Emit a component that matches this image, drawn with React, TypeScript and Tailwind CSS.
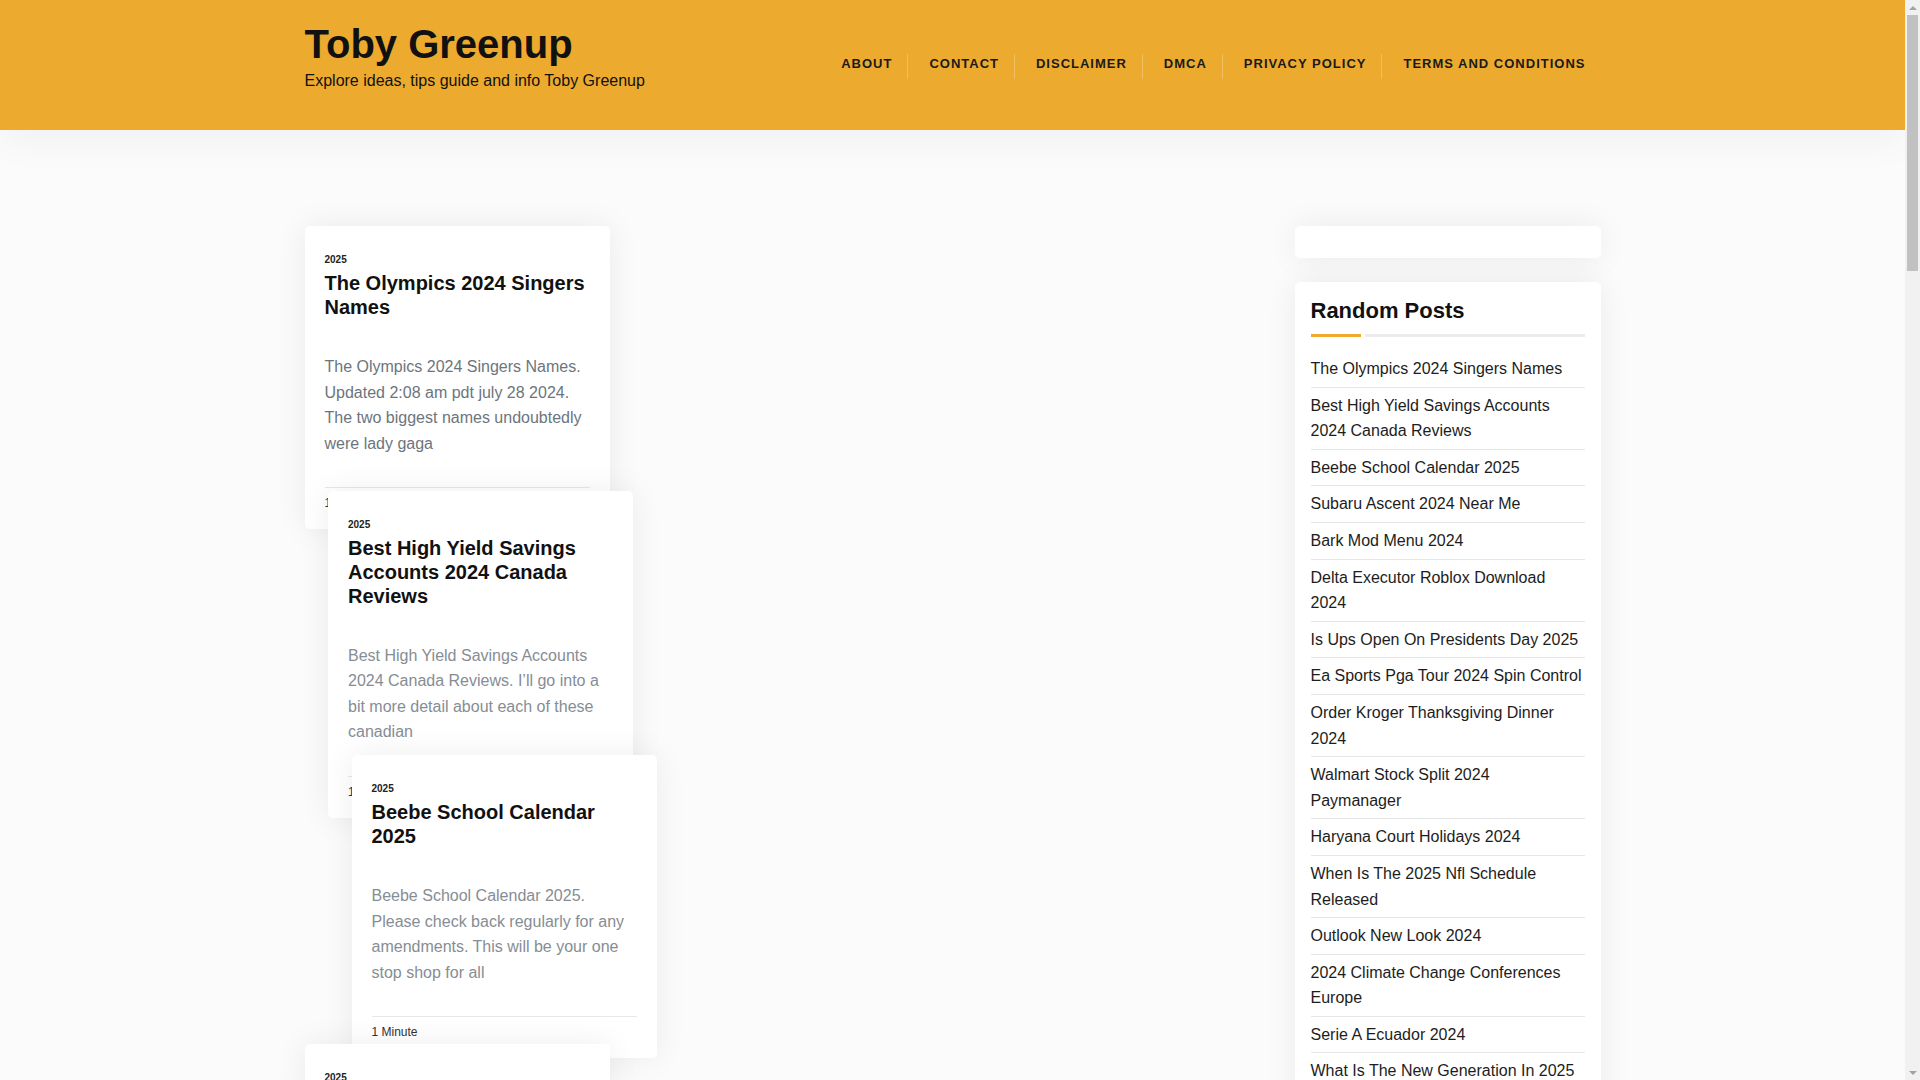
const navItems = [
  "About",
  "Contact",
  "Disclaimer",
  "DMCA",
  "Privacy Policy",
  "Terms and Conditions",
];

const randomPosts = [
  "The Olympics 2024 Singers Names",
  "Best High Yield Savings Accounts 2024 Canada Reviews",
  "Beebe School Calendar 2025",
  "Subaru Ascent 2024 Near Me",
  "Bark Mod Menu 2024",
  "Delta Executor Roblox Download 2024",
  "Is Ups Open On Presidents Day 2025",
  "Ea Sports Pga Tour 2024 Spin Control",
  "Order Kroger Thanksgiving Dinner 2024",
  "Walmart Stock Split 2024 Paymanager",
  "Haryana Court Holidays 2024",
  "When Is The 2025 Nfl Schedule Released",
  "Outlook New Look 2024",
  "2024 Climate Change Conferences Europe",
  "Serie A Ecuador 2024",
  "What Is The New Generation In 2025",
  "Nfl Draft 2024 Live Stream",
  "Calendar 2024 With Holidays Printable",
  "Best Budget Phones 2025 India",
  "Honda Civic 2025 Release Date",
];

type Post = {
  title: string;
  excerpt: string;
  top: number;
  left: number;
  faded?: boolean;
};

const posts: Post[] = [
  {
    title: "The Olympics 2024 Singers Names",
    excerpt:
      "The Olympics 2024 Singers Names. Updated 2:08 am pdt july 28 2024. The two biggest names undoubtedly were lady gaga",
    top: 0,
    left: 0,
  },
  {
    title: "Best High Yield Savings Accounts 2024 Canada Reviews",
    excerpt:
      "Best High Yield Savings Accounts 2024 Canada Reviews. I\u2019ll go into a bit more detail about each of these canadian",
    top: 264.5,
    left: 23.5,
    faded: true,
  },
  {
    title: "Beebe School Calendar 2025",
    excerpt:
      "Beebe School Calendar 2025. Please check back regularly for any amendments. This will be your one stop shop for all",
    top: 529,
    left: 47,
    faded: true,
  },
  {
    title: "Subaru Ascent 2024 Near Me",
    excerpt:
      "Subaru Ascent 2024 Near Me. Find the best deals on a new subaru ascent at a dealer near you and compare",
    top: 818,
    left: 0,
  },
  {
    title: "Bark Mod Menu 2024",
    excerpt:
      "Bark Mod Menu 2024. The latest version of the mod menu brings a handful of new features and fixes for",
    top: 1082.5,
    left: 23.5,
  },
  {
    title: "Delta Executor Roblox Download 2024",
    excerpt:
      "Delta Executor Roblox Download 2024. Download the latest version for android and ios devices with a",
    top: 1347,
    left: 47,
  },
  {
    title: "Is Ups Open On Presidents Day 2025",
    excerpt:
      "Is Ups Open On Presidents Day 2025. Ups stores and pickup services keep regular hours on the holiday",
    top: 1636,
    left: 0,
  },
  {
    title: "Ea Sports Pga Tour 2024 Spin Control",
    excerpt:
      "Ea Sports Pga Tour 2024 Spin Control. Learn how to add backspin and sidespin to your shots with the",
    top: 1900.5,
    left: 23.5,
  },
  {
    title: "Order Kroger Thanksgiving Dinner 2024",
    excerpt:
      "Order Kroger Thanksgiving Dinner 2024. Place your order online and pick up a complete holiday meal at",
    top: 2165,
    left: 47,
  },
  {
    title: "Walmart Stock Split 2024 Paymanager",
    excerpt:
      "Walmart Stock Split 2024 Paymanager. Associates can view how the split affects their shares through",
    top: 2454,
    left: 0,
  },
  {
    title: "Haryana Court Holidays 2024",
    excerpt:
      "Haryana Court Holidays 2024. The list of gazetted and restricted holidays for the courts of the state",
    top: 2718.5,
    left: 23.5,
  },
  {
    title: "When Is The 2025 Nfl Schedule Released",
    excerpt:
      "When Is The 2025 Nfl Schedule Released. The league usually unveils the full regular season slate in",
    top: 2983,
    left: 47,
  },
  {
    title: "Outlook New Look 2024",
    excerpt:
      "Outlook New Look 2024. The redesigned app brings a cleaner layout and a few handy tools for your",
    top: 3272,
    left: 0,
  },
  {
    title: "2024 Climate Change Conferences Europe",
    excerpt:
      "2024 Climate Change Conferences Europe. A roundup of the main events and summits taking place across",
    top: 3536.5,
    left: 23.5,
  },
];

function PostCard({ post }: { post: Post }) {
  return (
    <article
      className="absolute w-[305px] bg-white rounded-[5px] shadow-[0_0_32px_rgba(0,0,0,0.07)] px-5 pt-[27px] pb-[18px]"
      style={{ top: post.top, left: post.left }}
    >
      <div className="text-[10px] leading-[14px] font-bold text-[#222]">
        2025
      </div>
      <h2 className="mt-[4px] text-[20px] leading-[24px] font-bold text-[#111]">
        {post.title}
      </h2>
      <p
        className={
          post.faded
            ? "mt-[35px] text-[16px] leading-[25.6px] text-[#868d94]"
            : "mt-[35px] text-[16px] leading-[25.6px] text-[#6c757d]"
        }
      >
        {post.excerpt}
      </p>
      <div className="mt-[31px] border-t border-[#e8e8e8] pt-[7px] text-[12px] leading-[16px] font-medium text-[#333]">
        1 Minute
      </div>
    </article>
  );
}

// the reference was taken with a classic scrollbar showing on the right
function FakeScrollbar() {
  return (
    <div className="fixed top-0 right-0 z-50 w-[15px] h-screen bg-[#f1f1f1] flex flex-col items-center">
      <div className="h-[15px] flex items-center justify-center">
        <div className="w-0 h-0 border-l-[4px] border-r-[4px] border-b-[4px] border-l-transparent border-r-transparent border-b-[#a3a3a3]" />
      </div>
      <div className="w-[11px] h-[256px] bg-[#c1c1c1]" />
      <div className="flex-1" />
      <div className="h-[15px] flex items-center justify-center">
        <div className="w-0 h-0 border-l-[4px] border-r-[4px] border-t-[4px] border-l-transparent border-r-transparent border-t-[#a3a3a3]" />
      </div>
    </div>
  );
}

export default function App() {
  return (
    <div className="min-h-screen bg-[#fbfbfb] pr-[15px] font-['Liberation_Sans',Arial,sans-serif] text-[#111]">
      <FakeScrollbar />
      <header className="relative z-10 h-[130px] bg-[#ecaa2e] shadow-[0_8px_40px_rgba(0,0,0,0.05)]">
        <div className="w-[1296px] mx-auto flex justify-between">
          <div className="pt-[20px]">
            <h1 className="text-[40px] leading-[48px] font-bold text-[#111]">
              Toby Greenup
            </h1>
            <p className="mt-[1px] text-[16px] leading-[24px] text-[#111]">
              Explore ideas, tips guide and info Toby Greenup
            </p>
          </div>
          <nav className="mt-[54px] flex">
            {navItems.map((item, i) => (
              <a
                key={item}
                href="#"
                className={
                  i === 0
                    ? "h-[25px] pl-[21px] pr-[15px] pt-[2px] text-[13px] leading-[16px] font-bold uppercase tracking-[1px] text-[#1a1a1a]"
                    : "h-[25px] pl-[21px] pr-[15px] pt-[2px] text-[13px] leading-[16px] font-bold uppercase tracking-[1px] text-[#1a1a1a] border-l border-white/25"
                }
              >
                {item}
              </a>
            ))}
          </nav>
        </div>
      </header>

      <div className="w-[1296px] mx-auto flex gap-[30px] pt-[96px] pb-[60px]">
        <main className="relative w-[960px] h-[4140px] shrink-0">
          {posts.map((post) => (
            <PostCard key={post.title} post={post} />
          ))}
        </main>

        <aside className="flex-1 flex flex-col gap-6">
          <div className="h-[32px] bg-white rounded-[5px] shadow-[0_0_32px_rgba(0,0,0,0.07)]" />
          <div className="bg-white rounded-[5px] shadow-[0_0_32px_rgba(0,0,0,0.07)] px-4 pt-4 pb-5">
            <h3 className="text-[22px] leading-[26px] font-bold text-[#111]">
              Random Posts
            </h3>
            <div className="mt-[10px] mb-[14px] flex items-center">
              <div className="w-[50px] h-[3px] bg-[#ecaa2e]" />
              <div className="ml-1 flex-1 h-[3px] bg-[#ececec]" />
            </div>
            <ul>
              {randomPosts.map((title, i) => (
                <li
                  key={title}
                  className={
                    i === randomPosts.length - 1
                      ? "py-[5px] text-[16px] leading-[25.6px] text-[#1d1d1d]"
                      : "py-[5px] text-[16px] leading-[25.6px] text-[#1d1d1d] border-b border-[#e6e6e6]"
                  }
                >
                  <a href="#">{title}</a>
                </li>
              ))}
            </ul>
          </div>
        </aside>
      </div>
    </div>
  );
}
